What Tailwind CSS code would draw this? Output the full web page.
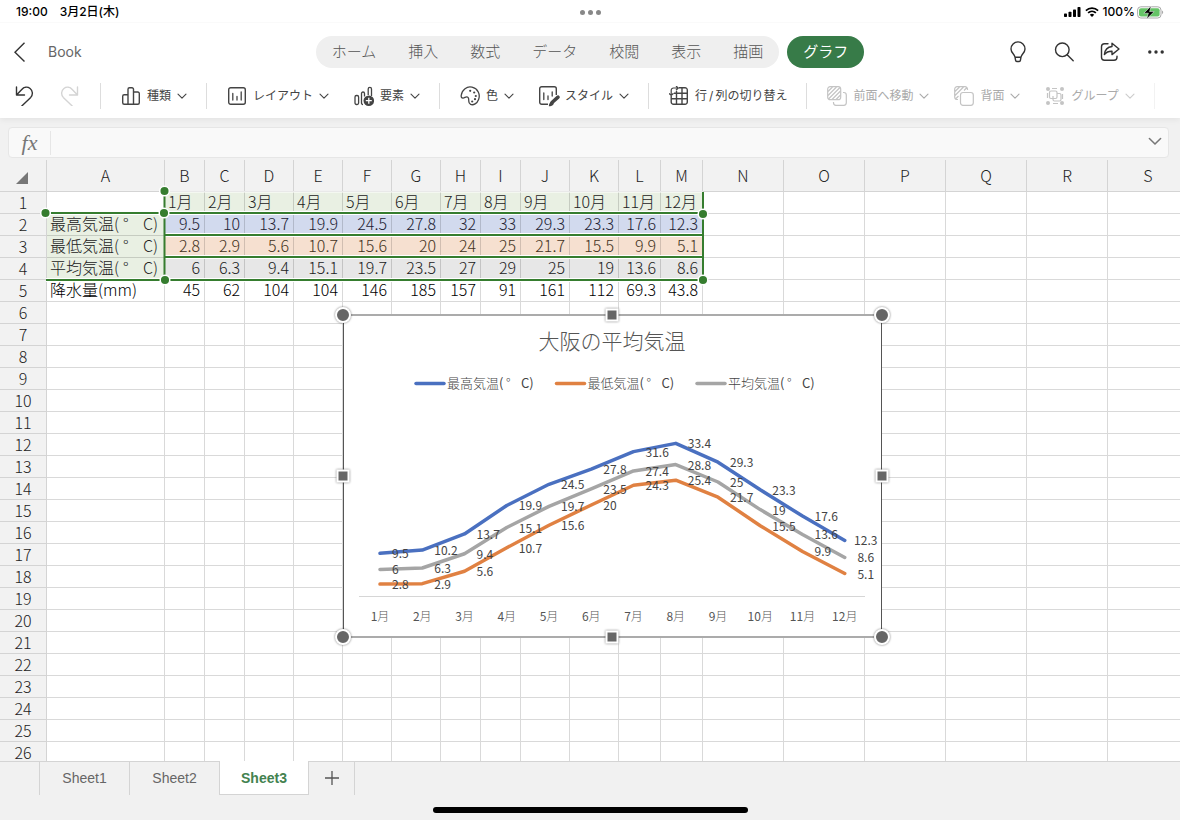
<!DOCTYPE html>
<html lang="ja">

<head>
    <meta charset="UTF-8">
    <meta name="viewport" content="width=device-width, initial-scale=1.0">
    <title>Book</title>
    <script src="https://cdn.jsdelivr.net/npm/@tailwindcss/browser@4"></script>
</head>

<body class="h-screen overflow-hidden flex flex-col bg-[#f1f1f1] font-['Inter','Noto_Sans_CJK_JP',sans-serif] text-[#444]">
    <!-- shared icons -->
    <svg class="hidden">
        <symbol id="chevron" viewBox="0 0 10 10">
            <path d="M1 3.2 5 7.2 9 3.2" fill="none" stroke="currentColor" stroke-width="1.1" stroke-linecap="round" stroke-linejoin="round" />
        </symbol>
        <symbol id="frame" viewBox="0 0 20 20">
            <rect x="1.7" y="1.7" width="16.6" height="16.6" rx="2" fill="none" stroke="currentColor" stroke-width="1.4" />
            <path d="M5.8 7.5V14M10 10.5V14M14.2 6V14" fill="none" stroke="currentColor" stroke-width="1.3" stroke-linecap="round" />
        </symbol>
    </svg>

    <header class="bg-white shadow-[0_2px_6px_rgba(0,0,0,0.06)] relative">
        <div class="h-[23px] pt-[2px] grid grid-cols-[1fr_auto_1fr] items-center px-4 text-xs font-medium text-black border-b border-[#fafafa]">
            <div class="flex gap-3 whitespace-nowrap"><span>19:00</span><span>3月2日(木)</span></div>
            <div class="flex gap-[3px]">
                <span class="size-[5px] rounded-full bg-[#888]"></span>
                <span class="size-[5px] rounded-full bg-[#888]"></span>
                <span class="size-[5px] rounded-full bg-[#888]"></span>
            </div>
            <div class="flex items-center justify-end gap-1">
                <svg class="w-[17px] h-[10px]" viewBox="0 0 17 10">
                    <rect x="0" y="6.6" width="3" height="3.4" rx=".7" />
                    <rect x="4.5" y="4.7" width="3" height="5.3" rx=".7" />
                    <rect x="9" y="2.6" width="3" height="7.4" rx=".7" />
                    <rect x="13.5" y="0" width="3" height="10" rx=".7" />
                </svg>
                <svg class="w-[14px] h-[10px]" viewBox="0 0 14 10">
                    <path d="M.9 3.6a8.9 8.9 0 0 1 12.2 0M3.1 5.9a5.7 5.7 0 0 1 7.8 0" fill="none" stroke="#000" stroke-width="1.7" />
                    <path d="M7 10 4.8 7.8a3.2 3.2 0 0 1 4.4 0Z" />
                </svg>
                <span>100%</span>
                <svg class="w-[27px] h-[13px] -ml-[2px]" viewBox="0 0 27 13">
                    <rect x=".6" y=".8" width="23.4" height="11.2" rx="3.2" fill="none" stroke="#aaa" />
                    <rect x="2" y="2.2" width="20.6" height="8.4" rx="2" fill="#65c466" />
                    <path d="M25 4.6c1.6.6 1.6 3 0 3.6Z" fill="#aaa" />
                    <path d="M14.2 0 6.8 7.2h4.6L9.6 13l7.6-7.4h-4.6Z" stroke="#fff" stroke-width=".5" />
                </svg>
            </div>
        </div>

        <div class="h-[58px] grid grid-cols-[1fr_auto_1fr] items-center px-3">
            <div class="flex items-center gap-[22px]">
                <button aria-label="戻る">
                    <svg class="w-[14px] h-5" viewBox="0 0 14 20"><path d="M12.5.8 3 10.2l9.5 9.3" fill="none" stroke="#333" stroke-width="1.4" /></svg>
                </button>
                <span class="text-sm text-[#666]">Book</span>
            </div>
            <nav class="flex gap-2 text-[15px] leading-8 font-light">
                <div class="flex gap-8 px-4 rounded-full bg-[#efefef] text-[#555]">
                    <button>ホーム</button>
                    <button>挿入</button>
                    <button>数式</button>
                    <button>データ</button>
                    <button>校閲</button>
                    <button>表示</button>
                    <button>描画</button>
                </div>
                <button class="px-4 rounded-full bg-[#377b48] text-white font-normal">グラフ</button>
            </nav>
            <div class="flex justify-end gap-[22px]">
                <button aria-label="ヒント">
                    <svg class="size-6" viewBox="0 0 24 24" fill="none" stroke="#333" stroke-width="1.4" stroke-linejoin="round">
                        <path d="M9 17.2C8.6 14.2 5 12.8 5 8.900a7 7 0 0 1 14 0c0 3.900-3.600 5.300-4 8.300ZM9 17.200l.6 3.200c.1.800.6 1.100 1.200 1.100h2.400c.6 0 1.100-.3 1.200-1.100l.6-3.200" />
                    </svg>
                </button>
                <button aria-label="検索">
                    <svg class="size-6" viewBox="0 0 24 24" fill="none" stroke="#333" stroke-width="1.4">
                        <circle cx="10.300" cy="9.800" r="6.800" />
                        <path d="m15.200 14.700 6 6" stroke-linecap="round" />
                    </svg>
                </button>
                <button aria-label="共有">
                    <svg class="size-6" viewBox="0 0 24 24" fill="none" stroke="#333" stroke-width="1.400" stroke-linecap="round" stroke-linejoin="round">
                        <path d="M10 3.700H6.500a3 3 0 0 0-3 3v10.500a3 3 0 0 0 3 3H16a3 3 0 0 0 3-3v-1" />
                        <path d="M14 3.200 21 9l-7 5.600v-3.300c-3.400-.1-5.700.9-7.600 3.200.5-4.600 3.200-7.600 7.600-8Z" />
                    </svg>
                </button>
                <button aria-label="その他">
                    <svg class="size-6" viewBox="0 0 24 24" fill="#333">
                        <circle cx="5.800" cy="12" r="1.700" />
                        <circle cx="12" cy="12" r="1.700" />
                        <circle cx="18.200" cy="12" r="1.700" />
                    </svg>
                </button>
            </div>
        </div>

        <div class="flex items-center h-[30px] pl-[14px] mb-[7px] text-xs whitespace-nowrap">
            <div class="flex gap-[25px]">
                <button aria-label="元に戻す">
                    <svg class="size-5" viewBox="0 0 20 20" fill="none" stroke="#333" stroke-width="1.400" stroke-linecap="round" stroke-linejoin="round">
                        <path d="M2.500 1v8h8M2.500 9l5-5.300c2.500-2.800 6-3.200 8.600-1.200 2.800 2.300 3 6.200.6 8.900L7.800 20" />
                    </svg>
                </button>
                <button aria-label="やり直し" disabled>
                    <svg class="size-5" viewBox="0 0 20 20" fill="none" stroke="#d4d4d4" stroke-width="1.400" stroke-linecap="round" stroke-linejoin="round">
                        <path d="M18.500 1v8h-8M18.500 9l-5-5.300c-2.500-2.800-6-3.200-8.600-1.200-2.800 2.300-3 6.200-.6 8.900L13.200 20" />
                    </svg>
                </button>
            </div>
            <span class="w-px h-[26px] bg-[#ddd] ml-[21px] mr-5"></span>
            <button class="flex items-center gap-[6px]">
                <svg class="size-5" viewBox="0 0 20 20" fill="none" stroke="currentColor" stroke-width="1.400" stroke-linejoin="round">
                    <path d="M7 18.300V3.300a1.500 1.500 0 0 1 1.500-1.500h2.500a1.500 1.500 0 0 1 1.500 1.500v15M7 8.700H3.200a1.500 1.500 0 0 0-1.500 1.500v6.600a1.500 1.500 0 0 0 1.500 1.500h13.600a1.500 1.500 0 0 0 1.500-1.500V7.500A1.500 1.500 0 0 0 16.800 6h-4.300" />
                </svg>
                種類
                <svg class="size-[10px]"><use href="#chevron" /></svg>
            </button>
            <span class="w-px h-[26px] bg-[#ddd] ml-[19px] mr-5"></span>
            <div class="flex gap-[25px]">
                <button class="flex items-center gap-[6px]">
                    <svg class="size-5"><use href="#frame" /></svg>
                    レイアウト
                    <svg class="size-[10px]"><use href="#chevron" /></svg>
                </button>
                <button class="flex items-center gap-[6px]">
                    <svg class="size-5" viewBox="0 0 20 20" fill="none" stroke="currentColor" stroke-width="1.300">
                        <rect x="1" y="9.500" width="3.600" height="9" rx="1.500" />
                        <path d="M9 18.500c-1 0-1.500-.6-1.500-1.500V7.500a1.500 1.500 0 0 1 3 0v3M14.200 9V3a1.600 1.600 0 0 1 3.300 0v7" />
                        <circle cx="14.800" cy="14.700" r="5.300" fill="currentColor" stroke="none" />
                        <path d="M14.800 11.700v6M11.800 14.700h6" stroke="#fff" />
                    </svg>
                    要素
                    <svg class="size-[10px]"><use href="#chevron" /></svg>
                </button>
            </div>
            <span class="w-px h-[26px] bg-[#ddd] ml-[19px] mr-5"></span>
            <div class="flex gap-[25px]">
                <button class="flex items-center gap-[6px]">
                    <svg class="size-5" viewBox="0 0 20 20" fill="none" stroke="currentColor" stroke-width="1.300">
                        <path d="M1.200 9.500C2 3.500 7 0 12 1.200c6 1.400 8.500 7.200 6.600 12.200-1.500 4-5.200 6.200-8 5-3.500-1.500-.6-4.700-2.600-7-1.600-1.800-3.300.8-5 .7C1.500 12 1 10.900 1.200 9.500Z" />
                        <g fill="currentColor" stroke="none">
                            <circle cx="10.200" cy="4.800" r="1.100" />
                            <circle cx="14.200" cy="6.500" r="1.100" />
                            <circle cx="15.800" cy="10" r="1.100" />
                            <circle cx="15" cy="13.200" r="1.100" />
                            <circle cx="12.200" cy="15.500" r="1.100" />
                        </g>
                    </svg>
                    色
                    <svg class="size-[10px]"><use href="#chevron" /></svg>
                </button>
                <button class="flex items-center gap-[6px]">
                    <svg class="size-5 overflow-visible" viewBox="0 0 20 20" fill="none" stroke="currentColor" stroke-width="1.400">
                        <path d="M9 18.300H2.700a2 2 0 0 1-2-2V2.700a2 2 0 0 1 2-2h12.600a2 2 0 0 1 2 2V9" />
                        <path d="M4.800 7v6.500M9 10v3.500M13.200 6v4" stroke-width="1.300" stroke-linecap="round" />
                        <path d="m13 16.500 6-5.300" stroke-width="3.600" stroke-linecap="round" />
                        <path d="M9.800 20.300c.2-3 1.400-4.500 3.200-4.500 2 .4 2.200 2.200 1 3.200-1 .9-2.400 1.300-4.200 1.300Z" fill="currentColor" stroke="none" />
                    </svg>
                    スタイル
                    <svg class="size-[10px]"><use href="#chevron" /></svg>
                </button>
            </div>
            <span class="w-px h-[26px] bg-[#ddd] ml-[19px] mr-5"></span>
            <button class="flex items-center gap-[6px]">
                <svg class="size-5" viewBox="0 0 20 20" fill="none" stroke="currentColor" stroke-width="1.400">
                    <path d="M10 1.700h6a2.300 2.300 0 0 1 2.300 2.300v12a2.300 2.300 0 0 1-2.300 2.300H4.500A2.300 2.300 0 0 1 2.200 16v-6M7.500 5v13.300M13 1.700v16.600M2.200 12.700h16.100M5 7.200h13.300" />
                    <path d="M7 0 9.300 2 7 4.200M8.800 2H4.500a2.300 2.300 0 0 0-2.300 2.300v5M0 7.300l2.200 2.200 2.300-2.200" stroke-width="1.200" />
                </svg>
                <span>行<span class="px-[2px]">/</span>列の切り替え</span>
            </button>
            <span class="w-px h-[26px] bg-[#ddd] ml-[19px] mr-5"></span>
            <div class="flex gap-[25px] text-[#aaa]">
                <button class="flex items-center gap-[6px]" disabled>
                    <svg class="size-5" viewBox="0 0 20 20" fill="none" stroke="#c4c4c4" stroke-width="1.200">
                        <rect x=".7" y=".7" width="13" height="13" rx="2.500" />
                        <path d="M1 5.500 5.500 1M1 9.500 9.500 1M1.500 13 13 1.500M5 13.500 13.500 5M9 13.500 13.500 9" />
                        <path d="M16 6.500h.8a2.500 2.500 0 0 1 2.500 2.500v7.800a2.500 2.500 0 0 1-2.500 2.500H9a2.500 2.500 0 0 1-2.500-2.500V16" />
                    </svg>
                    前面へ移動
                    <svg class="size-[10px]"><use href="#chevron" /></svg>
                </button>
                <button class="flex items-center gap-[6px]" disabled>
                    <svg class="size-5" viewBox="0 0 20 20" fill="none" stroke="#c4c4c4" stroke-width="1.200">
                        <path d="M4 13.500h-.8a2.500 2.500 0 0 1-2.500-2.500V3.200A2.500 2.500 0 0 1 3.200.7H11a2.500 2.500 0 0 1 2.500 2.500V4M1 5.500 5.500 1M1 9.500 9.500 1M1.500 13 4.500 10M10 4.500 13 1.500" />
                        <rect x="6.500" y="6.500" width="12.800" height="12.800" rx="2.500" />
                    </svg>
                    背面
                    <svg class="size-[10px]"><use href="#chevron" /></svg>
                </button>
                <button class="flex items-center gap-[6px]" disabled>
                    <svg class="size-5" viewBox="0 0 20 20" fill="none" stroke="#c4c4c4" stroke-width="1.200">
                        <g fill="#c4c4c4" stroke="none">
                            <circle cx="3" cy="3" r="2" />
                            <circle cx="17" cy="3" r="2" />
                            <circle cx="3" cy="17" r="2" />
                            <circle cx="17" cy="17" r="2" />
                        </g>
                        <path d="M7 2.500h5M8 17.500h5M2.500 7v5M17.500 8v5" />
                        <rect x="4.500" y="5" width="7.500" height="7.500" rx="1.500" />
                        <path d="M12 7.500h2.500A1.500 1.500 0 0 1 16 9v4.500a1.500 1.500 0 0 1-1.500 1.500H9.500A1.500 1.500 0 0 1 8 13.500V10" />
                    </svg>
                    グループ
                    <svg class="size-[10px] text-[#ccc]"><use href="#chevron" /></svg>
                </button>
            </div>
            <span class="w-px h-[26px] bg-[#f2f2f2] ml-[19px]"></span>
        </div>
    </header>

    <div class="flex items-center h-[31px] mt-[9px] mb-[2px] ml-2 mr-[11px] rounded border border-[#e6e6e6] bg-[#f9f9f9]">
        <label for="formula" class="w-[42px] text-center border-r border-[#e6e6e6] font-['Liberation_Serif',serif] italic text-[22px] leading-6 text-[#777]">fx</label>
        <input id="formula" type="text" class="flex-1 px-2 outline-none">
        <button class="pr-[6px] pb-[3px]" aria-label="展開">
            <svg class="size-[14px] text-[#777]"><use href="#chevron" /></svg>
        </button>
    </div>

    <main class="flex-1 min-h-0 overflow-hidden relative bg-white">
        <table class="table-fixed w-[1189px] border-separate border-spacing-0 text-base font-['Noto_Sans_CJK_JP',sans-serif] font-light text-[#222]">
            <thead>
                <tr id="letters" class="h-8"></tr>
            </thead>
            <tbody id="rows"></tbody>
        </table>

        <!-- source range of the chart -->
        <svg class="absolute left-0 top-0 w-[720px] h-[140px]" fill="none">
            <g stroke="#fff" stroke-width="4">
                <path d="M46 53H703M165 75H703M165 97H703M46 120H703" />
            </g>
            <path d="M165 32H703" stroke="#fff" stroke-width="1" />
            <g stroke="#367d2f" stroke-width="2">
                <path d="M45 53H703M165 75H703M165 97H703M46 120H703M164.500 31V120M703 32V120" />
            </g>
            <g fill="#367d2f" stroke="#fff" stroke-width="1.500">
                <circle cx="164.500" cy="31" r="4.800" />
                <circle cx="45.500" cy="53" r="4.800" />
                <circle cx="164" cy="53" r="4.800" />
                <circle cx="703" cy="54" r="4.800" />
                <circle cx="165" cy="120" r="4.800" />
                <circle cx="703" cy="120" r="4.800" />
            </g>
        </svg>

        <svg id="chart" class="absolute left-[343px] top-[155px] w-[539px] h-[322px] overflow-visible font-['Noto_Sans_CJK_JP',sans-serif]"></svg>
    </main>

    <footer class="h-[59px] relative border-t border-[#d4d4d4] text-sm font-['Liberation_Sans',sans-serif] text-[#666]">
        <div class="flex h-[33px] pl-[39px]">
            <button class="w-[90px] pb-[2px] border-l border-[#d4d4d4]">Sheet1</button>
            <button class="w-[90px] pb-[2px] border-l border-[#d4d4d4]">Sheet2</button>
            <button class="w-[90px] h-[34px] -mt-px border-x border-b border-[#d4d4d4] bg-white font-bold text-[#43824f]">Sheet3</button>
            <button class="w-[46px] pb-[2px] border-r border-[#d4d4d4] flex items-center justify-center" aria-label="シートの追加">
                <svg class="size-[14px]" viewBox="0 0 14 14"><path d="M7 0v14M0 7h14" stroke="#555" stroke-width="1.300" /></svg>
            </button>
        </div>
        <div class="mx-auto mt-3 w-[315px] h-[6px] rounded-full bg-black"></div>
    </footer>
</body>
<script>
    const widths = [47, 118, 40, 40, 49, 49, 49, 49, 40, 40, 49, 49, 42, 42, 81, 81, 81, 81, 81, 81];
    const months = ["1月", "2月", "3月", "4月", "5月", "6月", "7月", "8月", "9月", "10月", "11月", "12月"];
    const degree = '(<span class="inline-block w-6 pl-1">°</span>C)';
    const sheet = [
        ["", ...months],
        ["最高気温" + degree, 9.5, 10, 13.7, 19.9, 24.5, 27.8, 32, 33, 29.3, 23.3, 17.6, 12.3],
        ["最低気温" + degree, 2.8, 2.9, 5.6, 10.7, 15.6, 20, 24, 25, 21.7, 15.5, 9.9, 5.1],
        ["平均気温" + degree, 6, 6.3, 9.4, 15.1, 19.7, 23.5, 27, 29, 25, 19, 13.6, 8.6],
        ["降水量(mm)", 45, 62, 104, 104, 146, 185, 157, 91, 161, 112, 69.3, 43.8],
    ];
    const fills = ["bg-[#e9f0e3]", "bg-[#d2daee] text-[#223]", "bg-[#f6e0d0] text-[#432]", "bg-[#e7e7e7]", "text-black"];

    let head = `<th class="bg-[#f2f2f2] border-b border-r border-[#d4d4d4]" style="width:${widths[0]}px">
        <svg class="size-3 ml-4 mt-1" viewBox="0 0 12 12"><path d="M12 0v12H0Z" fill="#777" /></svg></th>`;
    for (let c = 1; c < widths.length; c++) {
        head += `<th class="bg-[#f2f2f2] border-b border-r border-[#d4d4d4] font-light leading-[31px]" style="width:${widths[c]}px">${String.fromCharCode(64 + c)}</th>`;
    }
    document.getElementById("letters").innerHTML = head;

    let body = "";
    for (let r = 0; r < 26; r++) {
        body += `<tr class="h-[22px] leading-[19px] whitespace-nowrap"><th class="bg-[#f2f2f2] border-b border-r border-[#d4d4d4] font-light p-0">${r + 1}</th>`;
        for (let c = 1; c < widths.length; c++) {
            const value = sheet[r]?.[c - 1] ?? "";
            const align = typeof value === "number" ? "text-right" : "text-left";
            let fill = "";
            if (c > 1 && c < 14) fill = fills[r] ?? "";
            if (c === 1 && r > 0 && r < 4) fill = fills[0];
            if (c === 1 && r === 4) fill = fills[4];
            body += `<td class="border-b border-r border-black/15 pl-[3px] pr-1 pt-0 pb-[2px] ${align} ${fill}">${value}</td>`;
        }
        body += "</tr>";
    }
    document.getElementById("rows").innerHTML = body;

    const series = [
        { name: "最高気温", color: "#4a70c0", data: [9.5, 10.2, 13.7, 19.9, 24.5, 27.8, 31.6, 33.4, 29.3, 23.3, 17.6, 12.3] },
        { name: "最低気温", color: "#e08142", data: [2.8, 2.9, 5.6, 10.7, 15.6, 20, 24.3, 25.4, 21.7, 15.5, 9.9, 5.1] },
        { name: "平均気温", color: "#a5a5a5", data: [6, 6.3, 9.4, 15.1, 19.7, 23.5, 27.4, 28.8, 25, 19, 13.6, 8.6] },
    ];
    const px = i => 37 + i * 42.25;
    const py = v => 282 - v * 4.6;

    let svg = `<rect width="539" height="322" fill="#fff" />
        <path d="M0 0H539M0 322H539" stroke="#ababab" stroke-width="2" />
        <path d="M.5 0V322M538.500 0V322" stroke="#555" />
        <text x="269" y="34" text-anchor="middle" class="text-[21px] font-light" fill="#555">大阪の平均気温</text>
        <path d="M16 281.500H522" stroke="#d6d6d6" />`;
    series.forEach((s, n) => {
        const x = 73 + n * 140.5;
        svg += `<path d="M${x} 68.500h28" stroke="${s.color}" stroke-width="3.500" stroke-linecap="round" />
            <g class="text-[13px] font-light" fill="#444"><text x="${x + 31}" y="73">${s.name}<tspan class="font-normal">(</tspan></text>
            <text x="${x + 90}" y="73">°</text><text x="${x + 105}" y="73" class="font-normal">C)</text></g>
            <polyline points="${s.data.map((v, i) => px(i) + "," + py(v)).join(" ")}" fill="none" stroke="${s.color}" stroke-width="3.500" stroke-linecap="round" stroke-linejoin="round" />`;
    });
    series.forEach(s => s.data.forEach((v, i) => {
        const last = i === 11;
        svg += `<text x="${px(i) + (last ? 21 : 12)}" y="${py(v) + 5}" text-anchor="${last ? "middle" : "start"}" class="text-xs" fill="#444">${v}</text>`;
    }));
    months.forEach((m, i) => {
        svg += `<text x="${px(i)}" y="306" text-anchor="middle" class="text-xs" fill="#555">${m.slice(0, -1)}<tspan class="font-light">月</tspan></text>`;
    });
    [[0, 0], [539, 0], [0, 322], [539, 322]].forEach(([x, y]) => {
        svg += `<circle cx="${x}" cy="${y}" r="7" fill="#666" stroke="#fff" stroke-width="2" class="drop-shadow-[0_0_1px_rgba(0,0,0,0.5)]" />`;
    });
    [[269, 0], [0, 161], [539, 161], [269, 322]].forEach(([x, y]) => {
        svg += `<rect x="${x - 5.5}" y="${y - 5.5}" width="11" height="11" fill="#666" stroke="#fff" stroke-width="2" class="drop-shadow-[0_0_1px_rgba(0,0,0,0.5)]" />`;
    });
    document.getElementById("chart").innerHTML = svg;
</script>

</html>
